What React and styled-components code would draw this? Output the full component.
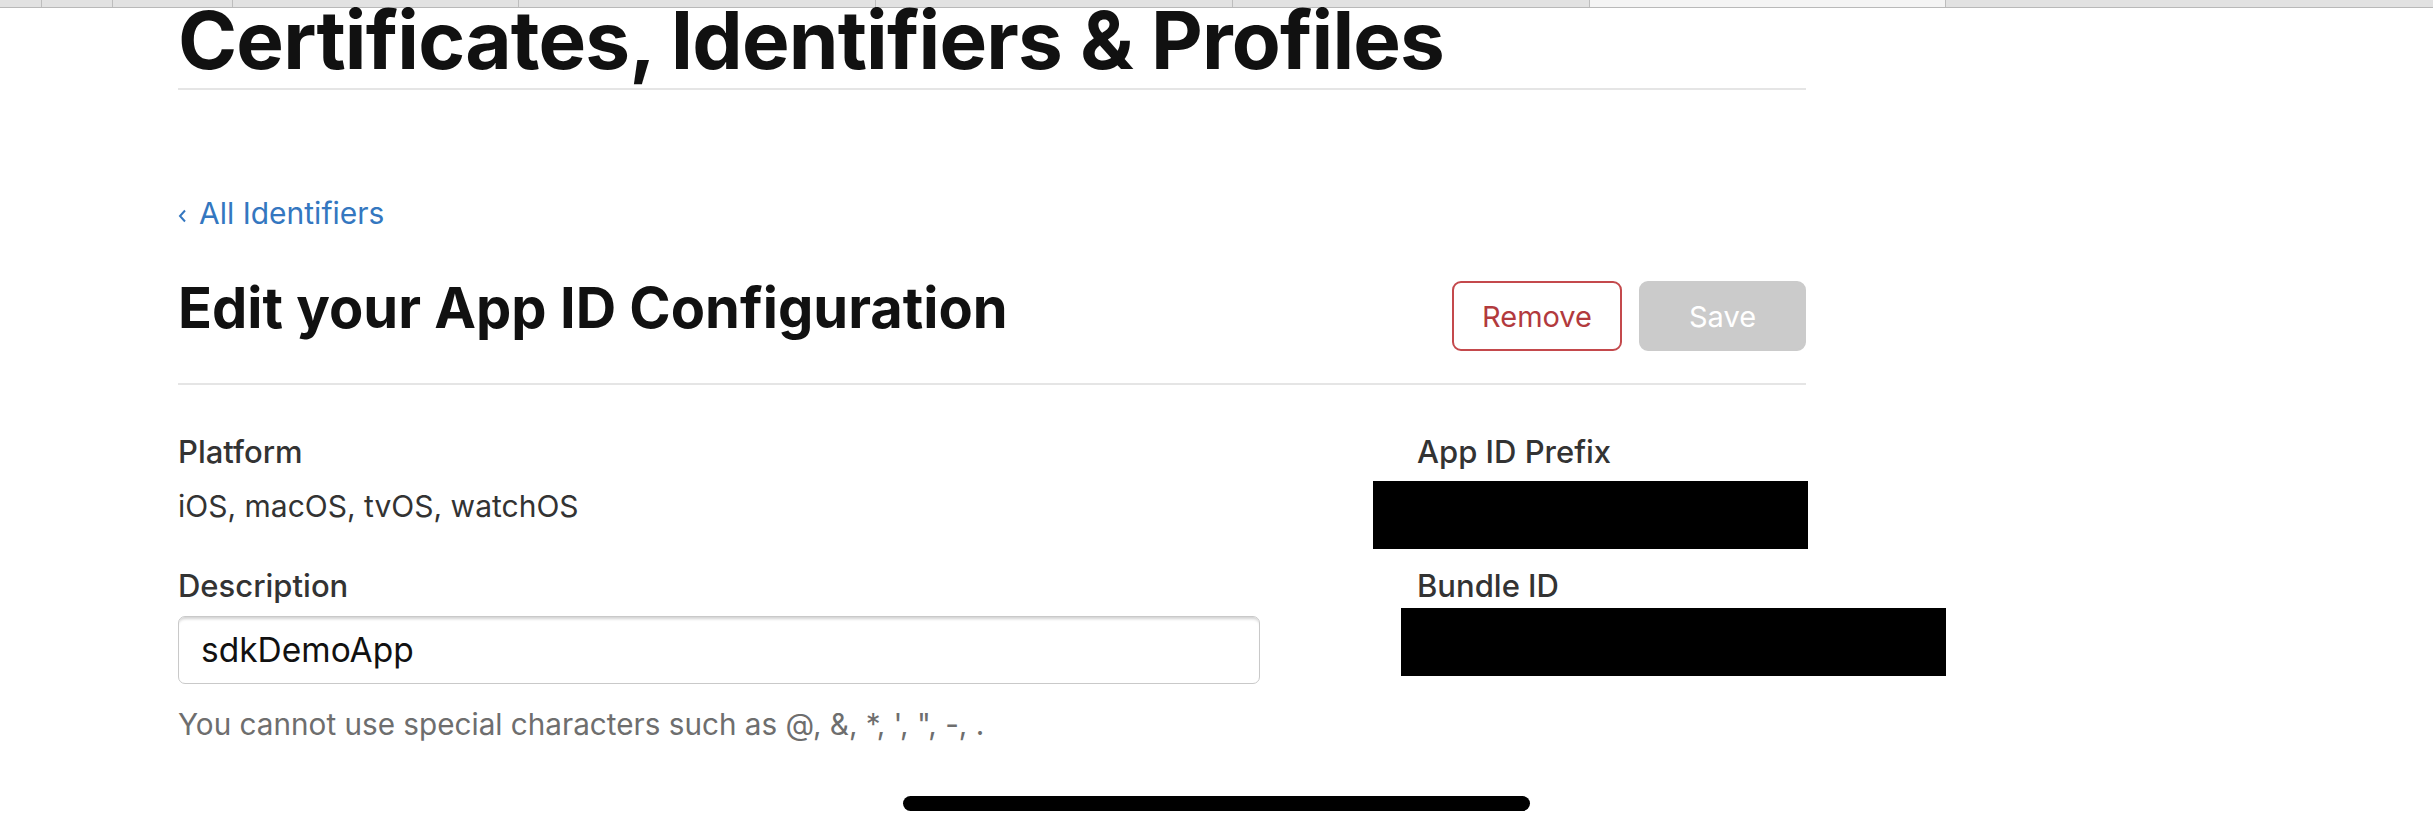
import React from 'react'
import styled, { createGlobalStyle } from 'styled-components'

const GlobalStyle = createGlobalStyle`
  html, body {
    margin: 0;
    padding: 0;
    background: #fff;
  }
  body {
    font-family: Inter, "Noto Sans", sans-serif;
    color: #1d1d1f;
    overflow: hidden;
    -webkit-font-smoothing: antialiased;
  }
`

// widths of the browser tabs peeking at the top edge
const tabs = [42, 71, 120, 286, 357, 357, 357, { w: 356, active: true }, null]

const App = () => {
  return (
    <Screen>
      <GlobalStyle />
      <TabStrip>
        {tabs.map((t, i) => {
          if (t === null) return <Tab key={i} $grow />
          if (typeof t === 'object') return <Tab key={i} $width={t.w} $active />
          return <Tab key={i} $width={t} />
        })}
      </TabStrip>

      <Content>
        <Title>Certificates, Identifiers &amp; Profiles</Title>
        <Rule $top={16} />

        <BackLink href="#">
          <svg width="9" height="14" viewBox="0 0 9 14">
            <polyline points="7,1.5 2,7 7,12.5" fill="none" stroke="currentColor" strokeWidth="2" />
          </svg>
          All Identifiers
        </BackLink>

        <HeaderRow>
          <Heading>Edit your App ID Configuration</Heading>
          <Actions>
            <Button $variant="danger" $width={170}>Remove</Button>
            <Button $variant="disabled" $width={167} disabled>Save</Button>
          </Actions>
        </HeaderRow>
        <Rule $top={32} />

        <Fields>
          <Field>
            <Label>Platform</Label>
            <Value>iOS, macOS, tvOS, watchOS</Value>
          </Field>
          <Field>
            <Label>App ID Prefix</Label>
            <Redacted $gap={11} $shift={-44} $width={435} />
          </Field>
          <Field>
            <Label>Description</Label>
            <Input defaultValue="sdkDemoApp" />
            <Help>You cannot use special characters such as @, &amp;, *, ', ", -, .</Help>
          </Field>
          <Field>
            <Label>Bundle ID</Label>
            <Redacted $gap={4} $shift={-16} $width={545} />
          </Field>
        </Fields>
      </Content>

      <HomeIndicator />
    </Screen>
  )
}

export default App

const Screen = styled.div`
  width: 2433px;
  height: 835px;
  display: flex;
  flex-direction: column;
  background: #fff;
`

const TabStrip = styled.div`
  display: flex;
  height: 7px;
  background: #e2e2e2;
  border-bottom: 1px solid #b9b9b9;
`

const Tab = styled.div`
  flex: ${p => (p.$grow ? '1' : `0 0 ${p.$width}px`)};
  background: ${p => (p.$active ? '#f4f4f4' : 'transparent')};
  border-right: ${p => (p.$grow ? 'none' : '1px solid #bdbdbd')};
  box-sizing: border-box;
`

const Content = styled.main`
  margin-left: 178px;
  width: 1628px;
`

const Title = styled.h1`
  margin: 0;
  font-size: 80px;
  line-height: 64px;
  font-weight: 700;
  letter-spacing: -0.85px;
  color: #111;
  white-space: nowrap;
`

const Rule = styled.hr`
  margin: ${p => p.$top}px 0 0;
  border: 0;
  height: 2px;
  background: #e5e5e5;
`

const BackLink = styled.a`
  display: inline-flex;
  align-items: baseline;
  gap: 12px;
  margin-top: 105px;
  font-size: 30px;
  line-height: 36px;
  color: #3477c0;
  text-decoration: none;

  svg {
    align-self: center;
    margin-top: 5px;
  }
`

const HeaderRow = styled.div`
  display: flex;
  justify-content: space-between;
  align-items: flex-start;
  margin-top: 50px;
`

const Heading = styled.h2`
  margin: 0;
  font-size: 56px;
  line-height: 54px;
  font-weight: 700;
  color: #111;
`

const Actions = styled.div`
  display: flex;
  gap: 17px;
`

const Button = styled.button`
  width: ${p => p.$width}px;
  height: 70px;
  border-radius: 9px;
  font-family: inherit;
  font-size: 29px;
  box-sizing: border-box;
  border: 2px solid ${p => (p.$variant === 'danger' ? '#c4494c' : '#cbcbcb')};
  background: ${p => (p.$variant === 'danger' ? '#fff' : '#cbcbcb')};
  color: ${p => (p.$variant === 'danger' ? '#b23a3d' : '#fff')};
`

const Fields = styled.div`
  display: grid;
  grid-template-columns: 1082px 1fr;
  column-gap: 157px;
  row-gap: 19px;
  margin-top: 49px;
`

const Field = styled.div`
  display: flex;
  flex-direction: column;
  align-items: flex-start;
`

const Label = styled.div`
  font-size: 31px;
  line-height: 36px;
  font-weight: 500;
  color: #333;
`

const Value = styled.div`
  margin-top: 18px;
  font-size: 30px;
  line-height: 36px;
  color: #333;
`

const Input = styled.input`
  margin-top: 12px;
  width: 100%;
  height: 68px;
  box-sizing: border-box;
  padding: 0 22px;
  border: 1.5px solid #c9c9c9;
  border-radius: 7px;
  box-shadow: inset 0 4px 3px -2px rgba(0, 0, 0, 0.18);
  font-family: inherit;
  font-size: 33.5px;
  color: #111;
  outline: none;
`

const Help = styled.div`
  margin-top: 22px;
  font-size: 29.7px;
  line-height: 36px;
  color: #6e6e6e;
`

const Redacted = styled.div`
  margin-top: ${p => p.$gap}px;
  margin-left: ${p => p.$shift}px;
  width: ${p => p.$width}px;
  height: 68px;
  background: #000;
`

const HomeIndicator = styled.div`
  align-self: center;
  margin-top: 54px;
  width: 627px;
  height: 15px;
  border-radius: 8px;
  background: #000;
`
